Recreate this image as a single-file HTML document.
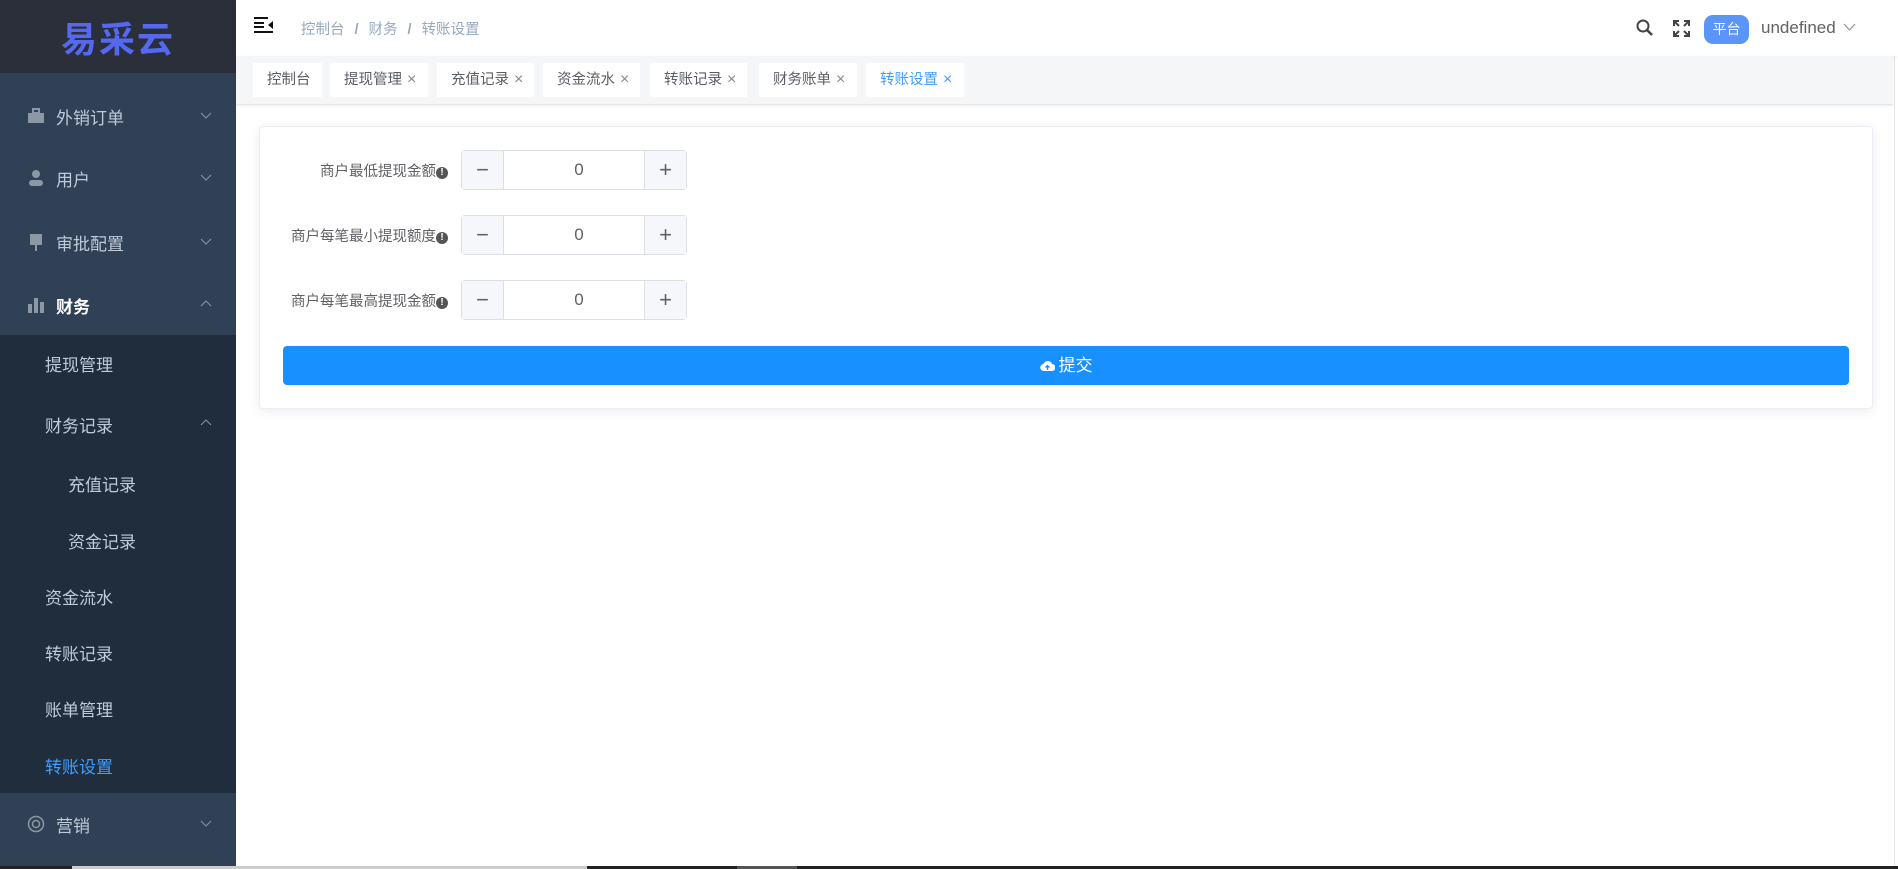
<!DOCTYPE html>
<html><head><meta charset="utf-8"><style>
*{margin:0;padding:0;box-sizing:border-box}
body{width:1898px;height:869px;overflow:hidden;background:#fff;font-family:"Liberation Sans","Noto Sans CJK SC",sans-serif;position:relative}
.side{position:absolute;left:0;top:0;width:236px;height:866px;background:#304156}
.logo{height:73px;background:#2b2f3a;color:#5468f0;font-size:36px;font-weight:bold;text-align:center;line-height:80px;letter-spacing:2px}
.mi{position:absolute;left:0;width:236px;color:#bfcbd9;font-size:17px}
.mi .ic{position:absolute;left:27px;top:-9px;width:18px;height:18px}
.mi .t{position:absolute;left:56px;top:-12px}
.mi .ar{position:absolute;left:200px;top:-7px;width:12px;height:12px}
.sub{position:absolute;left:0;top:335px;width:236px;height:458px;background:#1f2d3d}
.si{position:absolute;color:#bfcbd9;font-size:17px}
.main{position:absolute;left:236px;top:0;right:0;height:866px}
.hdr{height:56px;background:#fff;position:relative;box-shadow:0 1px 4px rgba(0,21,41,.08)}
.bc{position:absolute;left:65px;top:18px;font-size:14.5px;color:#97a8be}
.bc span.s{margin:0 10px;color:#97a8be;font-weight:bold}
.tabs{position:absolute;top:56px;left:0;right:5px;height:49px;background:#f5f6f8;border-bottom:1px solid #e6e6e6;box-shadow:0 1px 3px rgba(0,0,0,.08)}
.tab{position:absolute;top:7px;height:34px;background:#fff;font-size:14.5px;color:#5a5e66;line-height:34px;padding-left:14px}
.tab .x{font-size:16px;color:#888;margin-left:5px;font-weight:300}
.card{position:absolute;left:23px;top:126px;width:1614px;height:283px;border:1px solid #ebeef5;border-radius:4px;box-shadow:0 2px 12px rgba(0,0,0,.08);background:#fff}
.lab{position:absolute;right:1424px;font-size:14.5px;color:#606266;white-space:nowrap}
.lab i{display:inline-block;width:12px;height:12px;border-radius:50%;background:#555;color:#fff;font-size:10px;line-height:12px;text-align:center;font-style:normal;font-weight:bold;vertical-align:1px}
.num{position:absolute;left:201px;width:226px;height:40px;border:1px solid #dcdfe6;border-radius:4px;background:#fff}
.num .b{position:absolute;top:0;width:42px;height:38px;background:#f5f7fa;color:#606266;font-size:22px;text-align:center;line-height:37px;font-weight:300}
.num .v{position:absolute;left:42px;right:42px;top:0;height:38px;text-align:center;line-height:38px;font-size:17px;color:#606266;padding-left:10px}
.btn{position:absolute;left:23px;top:219px;width:1566px;height:39px;background:#1890ff;border-radius:4px;color:#fff;font-size:17px;text-align:center;line-height:39px}
</style></head><body>
<div class="side">
 <div class="logo">易采云</div>
 <div class="mi" style="top:116px"><svg class="ic" viewBox="0 0 18 18"><rect x="1" y="6" width="16" height="10" fill="#8d98a6"/><rect x="6" y="2" width="6" height="4" fill="none" stroke="#8d98a6" stroke-width="2"/></svg><span class="t">外销订单</span><svg class="ar" viewBox="0 0 12 12"><path d="M1 4l5 5 5-5" fill="none" stroke="#909399"/></svg></div>
 <div class="mi" style="top:178px"><svg class="ic" viewBox="0 0 18 18"><circle cx="9" cy="5" r="4" fill="#8d98a6"/><rect x="2" y="11" width="14" height="6" rx="3" fill="#8d98a6"/></svg><span class="t">用户</span><svg class="ar" viewBox="0 0 12 12"><path d="M1 4l5 5 5-5" fill="none" stroke="#909399"/></svg></div>
 <div class="mi" style="top:242px"><svg class="ic" viewBox="0 0 18 18"><rect x="3" y="1" width="12" height="9" fill="#8d98a6"/><rect x="3" y="10" width="12" height="2" fill="#8d98a6"/><rect x="8" y="12" width="2" height="6" fill="#8d98a6"/></svg><span class="t">审批配置</span><svg class="ar" viewBox="0 0 12 12"><path d="M1 4l5 5 5-5" fill="none" stroke="#909399"/></svg></div>
 <div class="mi" style="top:305px"><svg class="ic" viewBox="0 0 18 18"><rect x="1" y="8" width="4" height="9" fill="#8d98a6"/><rect x="7" y="2" width="4" height="15" fill="#8d98a6"/><rect x="13" y="6" width="4" height="11" fill="#8d98a6"/></svg><span class="t" style="color:#fff;font-weight:bold">财务</span><svg class="ar" viewBox="0 0 12 12"><path d="M1 8l5-5 5 5" fill="none" stroke="#909399"/></svg></div>
 <div class="sub">
  <div class="si" style="left:45px;top:16px">提现管理</div>
  <div class="si" style="left:45px;top:77px">财务记录</div>
  <svg style="position:absolute;left:200px;top:82px" width="12" height="12" viewBox="0 0 12 12"><path d="M1 8l5-5 5 5" fill="none" stroke="#909399"/></svg>
  <div class="si" style="left:68px;top:136px">充值记录</div>
  <div class="si" style="left:68px;top:193px">资金记录</div>
  <div class="si" style="left:45px;top:249px">资金流水</div>
  <div class="si" style="left:45px;top:305px">转账记录</div>
  <div class="si" style="left:45px;top:361px">账单管理</div>
  <div class="si" style="left:45px;top:418px;color:#409eff">转账设置</div>
 </div>
 <div class="mi" style="top:824px"><svg class="ic" viewBox="0 0 18 18"><circle cx="9" cy="9" r="7.5" fill="none" stroke="#8d98a6" stroke-width="1.5"/><circle cx="9" cy="9" r="3.5" fill="none" stroke="#8d98a6" stroke-width="1.5"/></svg><span class="t">营销</span><svg class="ar" viewBox="0 0 12 12"><path d="M1 4l5 5 5-5" fill="none" stroke="#909399"/></svg></div>
</div>
<div class="main">
 <div class="hdr">
  <svg style="position:absolute;left:18px;top:17px" width="20" height="16" viewBox="0 0 20 16"><path d="M0 1h14M0 6h10M0 10h10M0 15h19" stroke="#111" stroke-width="2"/><path d="M19 4v8l-5-4z" fill="#111"/></svg>
  <div class="bc">控制台<span class="s">/</span>财务<span class="s">/</span>转账设置</div>
  <svg style="position:absolute;left:1400px;top:19px" width="18" height="18" viewBox="0 0 18 18"><circle cx="7" cy="7" r="5.5" fill="none" stroke="#444" stroke-width="2"/><path d="M11 11l5 5" stroke="#444" stroke-width="2.5"/></svg>
  <svg style="position:absolute;left:1437px;top:20px" width="17" height="17" viewBox="0 0 17 17"><path d="M1 6V1h5M11 1h5v5M16 11v5h-5M6 16H1v-5M1 1l5 5M16 1l-5 5M16 16l-5-5M1 16l5-5" fill="none" stroke="#444" stroke-width="2"/></svg>
  <div style="position:absolute;left:1468px;top:15px;width:45px;height:29px;background:#5b95f8;border-radius:9px;color:#fff;font-size:14px;text-align:center;line-height:29px">平台</div>
  <div style="position:absolute;left:1525px;top:18px;font-size:17px;color:#606266">undefined</div>
  <svg style="position:absolute;left:1607px;top:23px" width="13" height="9" viewBox="0 0 13 9"><path d="M1 1l5.5 6L12 1" fill="none" stroke="#909399" stroke-width="1.2"/></svg>
 </div>
 <div class="tabs">
  <div class="tab" style="left:17px;width:69px">控制台</div>
  <div class="tab" style="left:94px;width:98px">提现管理<span class="x">×</span></div>
  <div class="tab" style="left:201px;width:97px">充值记录<span class="x">×</span></div>
  <div class="tab" style="left:307px;width:97px">资金流水<span class="x">×</span></div>
  <div class="tab" style="left:414px;width:97px">转账记录<span class="x">×</span></div>
  <div class="tab" style="left:523px;width:98px">财务账单<span class="x">×</span></div>
  <div class="tab" style="left:630px;width:98px;color:#409eff">转账设置<span class="x" style="color:#409eff">×</span></div>
 </div>
 <div class="card">
  <div class="lab" style="top:33px">商户最低提现金额<i>!</i></div>
  <div class="num" style="top:23px"><div class="b" style="left:0;border-right:1px solid #dcdfe6">−</div><div class="v">0</div><div class="b" style="right:0;border-left:1px solid #dcdfe6">+</div></div>
  <div class="lab" style="top:98px">商户每笔最小提现额度<i>!</i></div>
  <div class="num" style="top:88px"><div class="b" style="left:0;border-right:1px solid #dcdfe6">−</div><div class="v">0</div><div class="b" style="right:0;border-left:1px solid #dcdfe6">+</div></div>
  <div class="lab" style="top:163px">商户每笔最高提现金额<i>!</i></div>
  <div class="num" style="top:153px"><div class="b" style="left:0;border-right:1px solid #dcdfe6">−</div><div class="v">0</div><div class="b" style="right:0;border-left:1px solid #dcdfe6">+</div></div>
  <div class="btn"><svg width="15" height="12" viewBox="0 0 15 12" style="vertical-align:-1px;margin-right:4px"><path d="M4 11a3.5 3.5 0 0 1-.5-7A4.5 4.5 0 0 1 12 4a3.5 3.5 0 0 1 0 7z" fill="#fff"/><path d="M7.5 10V6M5.5 7.5l2-2 2 2" stroke="#1890ff" stroke-width="1.3" fill="none"/></svg>提交</div>
 </div>
 <div style="position:absolute;right:3px;top:56px;width:1px;height:810px;background:#e4e4e4"></div>
</div>
<div style="position:absolute;left:0;top:866px;width:1898px;height:3px;background:#222"></div>
<div style="position:absolute;left:72px;top:866px;width:515px;height:3px;background:#ccc"></div>
<div style="position:absolute;left:737px;top:866px;width:60px;height:3px;background:#555"></div>
</body></html>
